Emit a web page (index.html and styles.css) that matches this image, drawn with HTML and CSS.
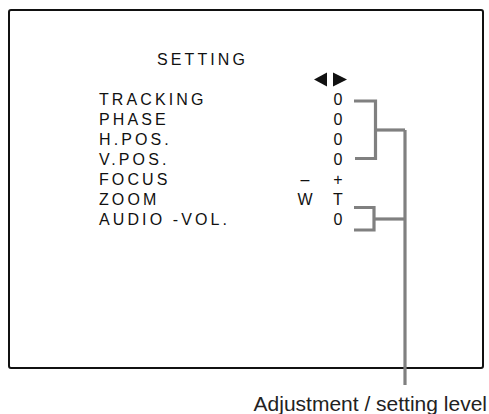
FILE: index.html
```html
<!DOCTYPE html>
<html lang="en">
<head>
    <meta charset="UTF-8">
    <meta name="viewport" content="width=device-width, initial-scale=1.0">
    <title>Setting menu</title>
    <link rel="stylesheet" href="styles.css">
</head>
<body>

    <!-- Ecran du menu -->
    <div class="screen">
        <div class="titre">SETTING</div>

        <div class="fleches">
            <svg width="35" height="15" viewBox="0 0 35 15">
                <polygon points="1,7.5 14,0.5 14,14.5" fill="#111"/>
                <polygon points="20,0.5 20,14.5 34,7.5" fill="#111"/>
            </svg>
        </div>

        <div class="menu">
            <div class="label">TRACKING</div><div class="val"></div><div class="val">0</div>
            <div class="label">PHASE</div><div class="val"></div><div class="val">0</div>
            <div class="label">H.POS.</div><div class="val"></div><div class="val">0</div>
            <div class="label">V.POS.</div><div class="val"></div><div class="val">0</div>
            <div class="label">FOCUS</div><div class="val">–</div><div class="val">+</div>
            <div class="label">ZOOM</div><div class="val">W</div><div class="val">T</div>
            <div class="label">AUDIO -VOL.</div><div class="val"></div><div class="val">0</div>
        </div>
    </div>

    <div class="legende">Adjustment / setting level</div>

    <!-- Traits de repere par-dessus l'ecran -->
    <svg class="reperes" width="489" height="414" viewBox="0 0 489 414">
        <polyline points="354,101 375.5,101 375.5,158.5 355,158.5"/>
        <line x1="375.5" y1="130" x2="405" y2="130"/>
        <polyline points="354,207.5 374,207.5 374,230 354,230"/>
        <line x1="374" y1="219" x2="405" y2="219"/>
        <line x1="405" y1="130" x2="405" y2="385"/>
    </svg>

</body>
</html>
```

FILE: styles.css
```css
/* Police et fond de la page */
body {
    margin: 0;
    font-family: "Liberation Sans", Arial, sans-serif;
    color: #111;
    background: #fff;
    position: relative;
    width: 489px;
    height: 414px;
    overflow: hidden;
}

/* Cadre de l'ecran */
.screen {
    box-sizing: border-box;
    width: 476px;
    height: 360px;
    margin: 9px 0 0 8px;
    border: 2px solid #111;
    border-radius: 3px;
    padding-top: 39px;
}

.titre {
    font-size: 16px;
    line-height: 20px;
    letter-spacing: 3.1px;
    padding-left: 147px;
}

.fleches {
    height: 19.5px;
    padding-left: 303px;
    display: flex;
    align-items: center;
}

.fleches svg {
    display: block;
}

/* Lignes du menu */
.menu {
    display: grid;
    grid-template-columns: 190px 32px 34px;
    padding-left: 89px;
    font-size: 16px;
    line-height: 20px;
}

.label {
    letter-spacing: 3.1px;
    white-space: nowrap;
}

.val {
    text-align: center;
}

/* Texte de legende sous l'ecran */
.legende {
    font-size: 21px;
    line-height: 24px;
    color: #222;
    text-align: right;
    padding-right: 2px;
    margin-top: 23px;
    white-space: nowrap;
}

/* Traits gris de repere */
.reperes {
    position: absolute;
    left: 0;
    top: 0;
    pointer-events: none;
}

.reperes polyline,
.reperes line {
    fill: none;
    stroke: #808080;
    stroke-width: 3.2;
    stroke-linejoin: miter;
}
```
